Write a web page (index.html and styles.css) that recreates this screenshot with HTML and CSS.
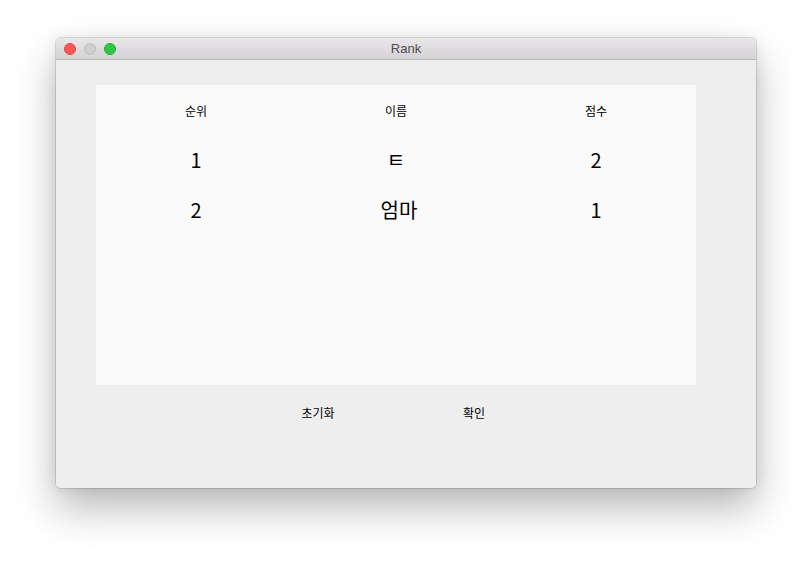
FILE: index.html
```html
<!DOCTYPE html>
<html lang="ko">
<head>
<meta charset="utf-8">
<link rel="stylesheet" href="styles.css">
</head>
<body>
<div class="window">
  <div class="titlebar">
    <div class="lights">
      <span class="light red"></span>
      <span class="light gray"></span>
      <span class="light green"></span>
    </div>
    <div class="title">Rank</div>
  </div>
  <div class="content">
    <div class="panel">
      <div class="row head">
        <div class="cell">순위</div>
        <div class="cell">이름</div>
        <div class="cell">점수</div>
      </div>
      <div class="row data">
        <div class="cell">1</div>
        <div class="cell">ㅌ</div>
        <div class="cell">2</div>
      </div>
      <div class="row data">
        <div class="cell">2</div>
        <div class="cell name">엄마</div>
        <div class="cell">1</div>
      </div>
    </div>
    <div class="buttons">
      <div class="btn">초기화</div>
      <div class="btn">확인</div>
    </div>
  </div>
</div>
</body>
</html>
```
FILE: styles.css
```css
html, body {
  margin: 0;
  padding: 0;
  background: #ffffff;
}
body {
  width: 812px;
  height: 562px;
  overflow: hidden;
  font-family: "Noto Sans CJK KR", "Noto Sans", sans-serif;
}
.window {
  margin: 38px 0 0 56px;
  width: 700px;
  height: 450px;
  border-radius: 5px;
  background: #ececec;
  box-shadow: 0 0 0 1px rgba(0,0,0,0.12), 0 20px 40px rgba(0,0,0,0.28), 0 0 14px rgba(0,0,0,0.08);
  overflow: hidden;
  display: flex;
  flex-direction: column;
}
.titlebar {
  height: 21px;
  flex: none;
  background: linear-gradient(#e9e7e9, #d4d2d4);
  border-bottom: 1px solid #b9b9b9;
  position: relative;
  display: flex;
  align-items: center;
  justify-content: center;
}
.lights {
  position: absolute;
  left: 8px;
  top: 5px;
  display: flex;
  gap: 8px;
}
.light {
  width: 12px;
  height: 12px;
  border-radius: 50%;
  box-sizing: border-box;
}
.red { background: #fc5753; border: 1px solid #df4744; }
.gray { background: #cfcfcf; border: 1px solid #bdbdbd; }
.green { background: #33c748; border: 1px solid #27aa35; }
.title {
  font-family: "Liberation Sans", "Noto Sans", sans-serif;
  font-size: 13px;
  color: #4d4d4d;
}
.content {
  flex: 1;
  background: #eeeeee;
  padding: 25px 60px 0 40px;
}
.panel {
  width: 600px;
  height: 300px;
  background: #fafafa;
}
.row {
  display: grid;
  grid-template-columns: repeat(3, 1fr);
  height: 50px;
  align-items: center;
  text-align: center;
  color: #000;
}
.head { font-size: 12px; }
.data {
  font-size: 20px;
  padding-bottom: 2px;
  box-sizing: border-box;
}
.name { padding-left: 6px; }
.buttons {
  width: 600px;
  display: flex;
  justify-content: center;
  gap: 56px;
  padding-top: 17px;
}
.btn {
  width: 100px;
  text-align: center;
  font-size: 12px;
  line-height: 22px;
  color: #000;
}
```
